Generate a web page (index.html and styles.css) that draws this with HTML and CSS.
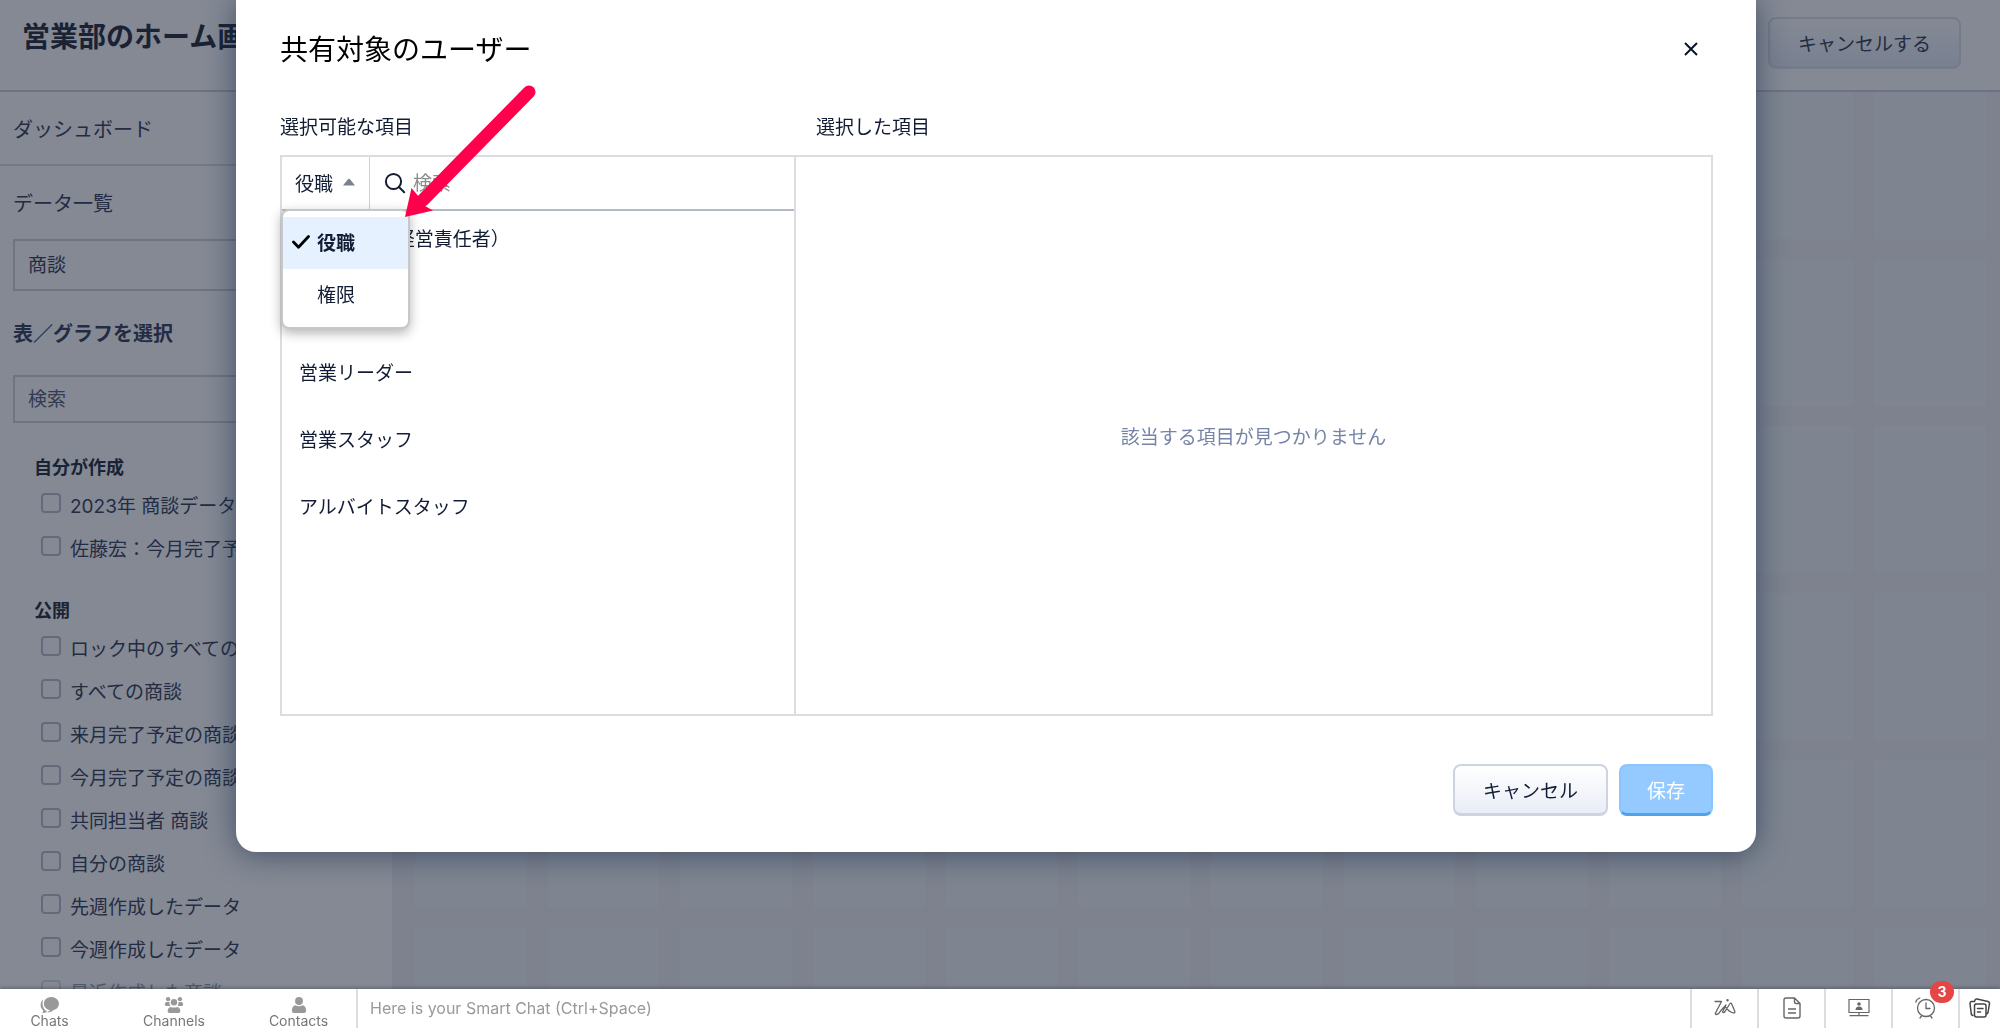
FILE: index.html
```html
<!DOCTYPE html>
<html lang="ja">
<head>
    <meta charset="UTF-8">
    <meta name="viewport" content="width=device-width, initial-scale=1.0">
    <title>営業部のホーム画面</title>
    <link rel="stylesheet" href="styles.css">
</head>
<body>
    <div class="page">
        <header class="page-header">
            <h1>営業部のホーム画面</h1>
            <button type="button" class="btn">キャンセルする</button>
        </header>
        <div class="page-body">
            <aside class="sidebar">
                <div class="sidebar-title">ダッシュボード</div>
                <div class="sidebar-fields">
                    <label class="field-label" for="module">データ一覧</label>
                    <select id="module" class="field module-field">
                        <option>商談</option>
                    </select>
                    <label class="field-label strong" for="chartSearch">表／グラフを選択</label>
                    <input type="text" id="chartSearch" class="field search-field" placeholder="検索">
                </div>
                <h3>自分が作成</h3>
                <ul class="check-list">
                    <li><label><input type="checkbox">2023年 商談データ</label></li>
                    <li><label><input type="checkbox">佐藤宏：今月完了予定</label></li>
                </ul>
                <h3>公開</h3>
                <ul class="check-list">
                    <li><label><input type="checkbox">ロック中のすべての商談</label></li>
                    <li><label><input type="checkbox">すべての商談</label></li>
                    <li><label><input type="checkbox">来月完了予定の商談</label></li>
                    <li><label><input type="checkbox">今月完了予定の商談</label></li>
                    <li><label><input type="checkbox">共同担当者 商談</label></li>
                    <li><label><input type="checkbox">自分の商談</label></li>
                    <li><label><input type="checkbox">先週作成したデータ</label></li>
                    <li><label><input type="checkbox">今週作成したデータ</label></li>
                    <li class="faded"><label><input type="checkbox">最近作成した商談</label></li>
                </ul>
            </aside>
            <main class="canvas" id="canvas"></main>
        </div>
    </div>

    <div class="overlay"></div>

    <div class="modal" role="dialog" aria-labelledby="modalTitle">
        <div class="modal-header">
            <h2 id="modalTitle">共有対象のユーザー</h2>
            <button type="button" class="close-button" aria-label="閉じる">
                <svg width="14" height="14" viewBox="0 0 14 14"><path d="M1 1l12 12M13 1L1 13" fill="none" stroke="#0a1429" stroke-width="2"/></svg>
            </button>
        </div>
        <div class="picker-labels">
            <div>選択可能な項目</div>
            <div>選択した項目</div>
        </div>
        <div class="picker">
            <div class="available">
                <div class="filter-row">
                    <button type="button" class="type-button" aria-haspopup="listbox" aria-expanded="true">役職
                        <svg width="14" height="8" viewBox="0 0 14 8"><path d="M1 7.5L6 1.2Q7 .3 8 1.2L13 7.5z" fill="#7c818e"/></svg>
                    </button>
                    <svg class="search-icon" width="22" height="22" viewBox="0 0 22 22"><g fill="none" stroke="#121d35" stroke-width="2" stroke-linecap="round"><circle cx="9.5" cy="9.5" r="7.6"/><path d="M15.2 15.2l5 5"/></g></svg>
                    <input type="text" class="filter-input" placeholder="検索" aria-label="検索">
                </div>
                <ul class="role-list">
                    <li>CEO（最高経営責任者）</li>
                    <li></li>
                    <li>営業リーダー</li>
                    <li>営業スタッフ</li>
                    <li>アルバイトスタッフ</li>
                </ul>
                <ul class="dropdown" role="listbox">
                    <li class="selected" role="option" aria-selected="true">
                        <svg width="18" height="14" viewBox="0 0 18 14"><path d="M1.5 7l5 5.2L16.5 1.5" fill="none" stroke="#000" stroke-width="2.8" stroke-linecap="round" stroke-linejoin="round"/></svg>
                        役職
                    </li>
                    <li role="option" aria-selected="false">権限</li>
                </ul>
            </div>
            <div class="chosen">該当する項目が見つかりません</div>
        </div>
        <div class="modal-footer">
            <button type="button" class="btn">キャンセル</button>
            <button type="button" class="btn btn-primary">保存</button>
        </div>
        <svg class="arrow" width="140" height="140" viewBox="0 0 140 140">
            <path d="M128 16L22 124" stroke="#ff004c" stroke-width="13" stroke-linecap="round"/>
            <path d="M4 141L10.500 112L18 121L24 130L32 134.500z" fill="#ff004c"/>
        </svg>
    </div>

    <footer class="chat-bar">
        <nav class="chat-tabs">
            <a href="#">
                <svg width="20" height="17" viewBox="0 0 20 17" fill="#999"><path d="M11.500 0C16 0 19.500 3 19.500 7s-3 6.500-6.500 7c1 1 2.500 1.800 4 2-3 .6-6-.3-7.500-2C6 13.500 3.500 10.500 3.500 7S7 0 11.500 0z" transform="matrix(-1 0 0 1 23 0)"/><path d="M3 2.500C1 4 0 6 0 8.500c0 2.500 1 4.300 2.700 5.500.2 1-.2 2-.9 3 2 0 3.800-.6 5-1.700C4 14 2 10.500 2 7.200c0-1.700.3-3.300 1-4.700z"/></svg>
                Chats
            </a>
            <a href="#">
                <svg width="20" height="17" viewBox="0 0 20 17" fill="#999"><circle cx="3.700" cy="2.300" r="2.300"/><circle cx="16.300" cy="2.300" r="2.300"/><circle cx="10" cy="5.500" r="3.400"/><path d="M1.500 5.200h3.800c-.3 1.400 0 3 .9 4.300H2C.5 9.500 0 8.500.3 7.300zM18.500 5.200h-3.800c.3 1.400 0 3-.9 4.300H18c1.500 0 2-1 1.700-2.200zM6 10.500c2.500 1 5.500 1 8 0 2 .7 3 3 2.700 5-.1 1-.7 1.500-1.700 1.500H5c-1 0-1.600-.5-1.700-1.500-.3-2 .7-4.300 2.700-5z"/></svg>
                Channels
            </a>
            <a href="#">
                <svg width="20" height="17" viewBox="0 0 20 17" fill="#999"><circle cx="10" cy="4.200" r="4.200"/><path d="M6 8.700c2.500 1.400 5.500 1.400 8 0 2.500.7 3.700 3 3.500 6-.1 1.600-.8 2.300-2 2.300h-11c-1.200 0-1.900-.7-2-2.300-.2-3 1-5.300 3.500-6z"/></svg>
                Contacts
            </a>
        </nav>
        <input type="text" class="smart-chat" placeholder="Here is your Smart Chat (Ctrl+Space)" aria-label="Smart Chat">
        <div class="tools">
            <button type="button" aria-label="Zia">
                <svg width="22" height="18" viewBox="0 0 22 18" fill="none" stroke="#666" stroke-width="1.300" stroke-linecap="round" stroke-linejoin="round"><path d="M1 2.500h6.500L1.500 14q-.5 1.700 1 1.500 2.500-.3 4-3.500L12 6 8.500 13q1 1.500 2.500-.5l5-8q1-1 1.600.3l3.200 7.500q.4 2-1.500 1.600-4-.8-7.500-5.500"/><circle cx="13.500" cy="1.300" r=".6"/></svg>
            </button>
            <button type="button" aria-label="Notes">
                <svg width="18" height="22" viewBox="0 0 18 22" fill="none" stroke="#666" stroke-width="1.400" stroke-linejoin="round"><path d="M3 1h8.500L17 6.500V19q0 2-2 2H3q-2 0-2-2V3q0-2 2-2zM11.500 1v4q0 1.500 1.500 1.500h4M5 12h8M5 16h8"/></svg>
            </button>
            <button type="button" aria-label="Screen share">
                <svg width="22" height="20" viewBox="0 0 22 20" fill="none" stroke="#666" stroke-width="1.200"><path d="M1 1.500h20v13H1zM11 14.500v3M1.500 17.600h19"/><path d="M7.500 12q0-3.500 3.500-3.500t3.500 3.500z" fill="#666" stroke="none"/><circle cx="11" cy="6" r="1.800" fill="#666" stroke="none"/></svg>
            </button>
            <button type="button" aria-label="Reminders">
                <svg width="22" height="22" viewBox="0 0 22 22" fill="none" stroke="#666" stroke-width="1.300" stroke-linecap="round"><circle cx="11" cy="11" r="8.500"/><path d="M11 6v5.500h4M6.500 19L5 21M15.500 19l1.500 2M.8 5Q1.500 2 4.800 1"/></svg>
                <span class="badge">3</span>
            </button>
            <button type="button" class="last" aria-label="Recent chats">
                <svg width="22" height="20" viewBox="0 0 22 20" fill="none" stroke="#444" stroke-width="1.500" stroke-linecap="round" stroke-linejoin="round"><path d="M6.500 6H15q2 0 2 2v9q0 2-2 2H7.500q-2 0-2-2V8q0-2 2-2M8.500 10.500h5.500M8.500 14h3M3.800 17.500Q2.500 17 2.300 16L1 5.500Q1 3.700 2.500 3.500l3-.3M5.500 3.500L6 2q.5-1.300 2-1l11 2.500q1.800.7 1.500 2L19 14.500q-.3 1-1 1.300"/></svg>
            </button>
        </div>
    </footer>

    <script>
        // Fill the dashboard canvas with empty grid cells
        const canvas = document.getElementById('canvas');
        for (let i = 0; i < 72; i++) {
            const cell = document.createElement('div');
            cell.className = 'cell';
            canvas.appendChild(cell);
        }
    </script>
</body>
</html>
```

FILE: styles.css
```css
* {
    box-sizing: border-box;
}

body {
    margin: 0;
    height: 100vh;
    overflow: hidden;
    font-family: Inter, "Noto Sans CJK JP", sans-serif;
    font-size: 19px;
    color: #121d35;
}

h1, h2, h3, ul {
    margin: 0;
    padding: 0;
}

ul {
    list-style: none;
}

button, input, select {
    font: inherit;
    color: inherit;
}

button {
    cursor: pointer;
}

/* Page */
.page {
    height: 100vh;
    display: flex;
    flex-direction: column;
}

.page-header {
    display: flex;
    justify-content: space-between;
    align-items: center;
    height: 92px;
    flex-shrink: 0;
    padding: 0 39px 4px 22px;
    border-bottom: 2px solid #ced3dc;
    background-color: #fff;
}

.page-header h1 {
    font-size: 28px;
    line-height: 40px;
    padding-bottom: 12px;
    color: #2b303c;
}

.btn {
    height: 52px;
    padding: 0 28px 1px;
    border: 2px solid #ced3e2;
    border-bottom-width: 3px;
    border-radius: 8px;
    background: linear-gradient(#fff, #e9edf6);
}

.page-header .btn {
    border-color: #e0e2ee;
    color: #3c455c;
}

.page-body {
    flex: 1;
    display: flex;
    min-height: 0;
}

.sidebar {
    width: 392px;
    flex-shrink: 0;
    overflow: hidden;
    background-color: #fff;
    color: #3c455c;
}

.sidebar-title {
    height: 74px;
    padding: 0 13px;
    border-bottom: 2px solid #dcdfe8;
    font-size: 20px;
    line-height: 76px;
}

.sidebar-fields {
    display: flex;
    flex-direction: column;
    padding: 23px 13px 0;
}

.field-label {
    font-size: 20px;
    line-height: 30px;
}

.strong {
    font-weight: bold;
    margin-top: 28px;
}

.field {
    width: 100%;
    padding: 0 13px;
    border: 2px solid #d0d4dc;
    border-radius: 0;
    background-color: #fff;
    appearance: none;
}

.module-field {
    height: 52px;
    margin-top: 20px;
}

.search-field {
    height: 48px;
    margin-top: 26px;
}

.search-field::placeholder {
    color: #5c6478;
}

.sidebar h3 {
    padding: 27px 34px 0;
    font-size: 18px;
    line-height: 30px;
    color: #2b303c;
}

.sidebar-fields + h3 {
    padding-top: 30px;
}

.check-list {
    padding-left: 41px;
}

.check-list label {
    display: flex;
    align-items: center;
    gap: 9px;
    height: 43px;
    white-space: nowrap;
}

.check-list input {
    appearance: none;
    width: 20px;
    height: 20px;
    flex-shrink: 0;
    margin: 0 0 4px;
    border: 2px solid #bbc0cc;
    border-radius: 4px;
}

.faded {
    opacity: 0.5;
}

.canvas {
    flex: 1;
    display: grid;
    grid-template-columns: repeat(12, 1fr);
    grid-auto-rows: 147px;
    gap: 20px 21px;
    padding: 0 14px 0 23px;
    overflow: hidden;
    background-color: #f1f0f3;
}

.cell {
    background-color: #f3f6f8;
}

.overlay {
    position: fixed;
    inset: 0;
    background-color: rgba(10, 20, 41, 0.5);
}

/* Modal */
.modal {
    position: absolute;
    top: 0;
    left: 236px;
    right: 244px;
    padding: 0 43px 36px 44px;
    border-radius: 0 0 20px 20px;
    background-color: #fff;
    box-shadow: 0 2px 30px rgba(20, 40, 70, 0.6);
}

.modal-header {
    display: flex;
    justify-content: space-between;
    align-items: center;
    height: 98px;
}

.modal-header h2 {
    padding-bottom: 2px;
    font-size: 28px;
    font-weight: normal;
    color: #000;
}

.close-button {
    display: flex;
    padding: 10px;
    margin-right: 5px;
    border: none;
    background: none;
}

.picker-labels {
    display: flex;
    height: 57px;
    line-height: 60px;
}

.picker-labels div:first-child {
    width: 536px;
}

.picker {
    display: flex;
    height: 561px;
    border: 2px solid #dcdddf;
}

.available {
    position: relative;
    width: 514px;
    border-right: 2px solid #dcdddf;
}

.filter-row {
    display: flex;
    align-items: center;
    height: 54px;
    border-bottom: 2px solid #b4b9c6;
}

.type-button {
    display: flex;
    align-items: center;
    gap: 9px;
    height: 100%;
    padding: 0 13px 2px;
    border: none;
    border-right: 1px solid #ced0d4;
    background: none;
}

.search-icon {
    margin: 0 7px 0 14px;
}

.filter-input {
    flex: 1;
    min-width: 0;
    padding: 0;
    border: none;
    outline: none;
    background: none;
}

.filter-input::placeholder {
    color: #8c8c8c;
}

.role-list li {
    height: 67px;
    padding: 13px 17px 0;
    line-height: 32px;
}

.dropdown {
    position: absolute;
    top: 52px;
    left: -1px;
    width: 129px;
    padding: 6px 0;
    border: 2px solid #c6c7c9;
    border-radius: 8px;
    background-color: #fff;
    box-shadow: 0 4px 12px rgba(0, 0, 0, 0.3);
}

.dropdown li {
    display: flex;
    align-items: center;
    gap: 7px;
    height: 52px;
    padding: 0 0 3px 34px;
}

.dropdown .selected {
    padding-left: 9px;
    font-weight: bold;
    background-color: #e5f1ff;
}

.chosen {
    flex: 1;
    display: flex;
    align-items: center;
    justify-content: center;
    color: #7684a8;
}

.modal-footer {
    display: flex;
    justify-content: flex-end;
    gap: 11px;
    padding-top: 48px;
}

.modal-footer .btn-primary {
    padding: 0 26px 1px;
    border-color: #8bc5ff;
    border-bottom-color: #4fa3ea;
    background: #94caff;
    color: #fff;
}

.arrow {
    position: absolute;
    top: 76px;
    left: 165px;
    overflow: visible;
}

/* Chat bar */
.chat-bar {
    position: fixed;
    left: 0;
    right: 0;
    bottom: 0;
    display: flex;
    height: 39px;
    background-color: #fff;
    box-shadow: 0 -1px 4px rgba(0, 0, 0, 0.3);
    color: #777;
}

.chat-tabs {
    display: flex;
    width: 358px;
    border-right: 2px solid #ddd;
}

.chat-tabs a {
    display: flex;
    flex-direction: column;
    align-items: center;
    width: 99px;
    padding-top: 8px;
    flex-shrink: 0;
    font-size: 14px;
    line-height: 15px;
    color: inherit;
    text-decoration: none;
}

.chat-tabs a:nth-child(2) {
    width: 150px;
}

.smart-chat {
    flex: 1;
    padding: 0 12px 2px;
    border: none;
    outline: none;
    font-size: 16px;
}

.smart-chat::placeholder {
    color: #999;
}

.tools {
    display: flex;
}

.tools button {
    position: relative;
    display: flex;
    align-items: center;
    justify-content: center;
    width: 67px;
    padding: 0 0 2px;
    border: none;
    border-left: 2px solid #ddd;
    background: none;
}

.tools .last {
    width: 42px;
}

.badge {
    position: absolute;
    top: -8px;
    right: 4px;
    width: 24px;
    height: 22px;
    border-radius: 11px;
    background-color: #e64545;
    color: #fff;
    font-size: 14px;
    font-weight: bold;
    line-height: 22px;
    text-align: center;
}
```
